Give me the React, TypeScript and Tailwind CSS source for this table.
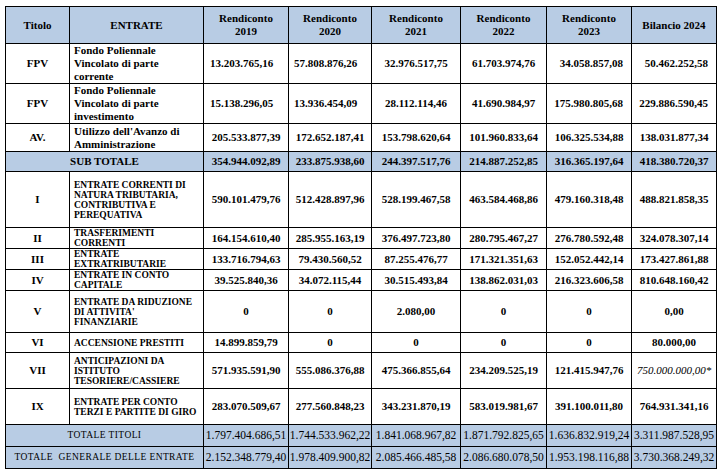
import React from "react";

type Row = {
  t: string;
  d: string[];
  v: string[];
  h: string;
  caps?: boolean;
  fpv?: boolean;
};

const rows: Row[] = [
  {
    t: "FPV",
    d: ["Fondo Poliennale", "Vincolato di parte", "corrente"],
    v: ["13.203.765,16", "57.808.876,26", "32.976.517,75", "61.703.974,76", "34.058.857,08", "50.462.252,58"],
    h: "h-[39px]",
    fpv: true,
  },
  {
    t: "FPV",
    d: ["Fondo Poliennale", "Vincolato di parte", "investimento"],
    v: ["15.138.296,05", "13.936.454,09", "28.112.114,46", "41.690.984,97", "175.980.805,68", "229.886.590,45"],
    h: "h-[39px]",
    fpv: true,
  },
  {
    t: "AV.",
    d: ["Utilizzo dell'Avanzo di", "Amministrazione"],
    v: ["205.533.877,39", "172.652.187,41", "153.798.620,64", "101.960.833,64", "106.325.534,88", "138.031.877,34"],
    h: "h-[28px]",
  },
];

const rows2: Row[] = [
  {
    t: "I",
    d: ["ENTRATE CORRENTI DI", "NATURA TRIBUTARIA,", "CONTRIBUTIVA E", "PEREQUATIVA"],
    v: ["590.101.479,76", "512.428.897,96", "528.199.467,58", "463.584.468,86", "479.160.318,48", "488.821.858,35"],
    h: "h-[56px]",
    caps: true,
  },
  {
    t: "II",
    d: ["TRASFERIMENTI", "CORRENTI"],
    v: ["164.154.610,40", "285.955.163,19", "376.497.723,80", "280.795.467,27", "276.780.592,48", "324.078.307,14"],
    h: "h-[21px]",
    caps: true,
  },
  {
    t: "III",
    d: ["ENTRATE", "EXTRATRIBUTARIE"],
    v: ["133.716.794,63", "79.430.560,52", "87.255.476,77", "171.321.351,63", "152.052.442,14", "173.427.861,88"],
    h: "h-[20px]",
    caps: true,
  },
  {
    t: "IV",
    d: ["ENTRATE IN CONTO", "CAPITALE"],
    v: ["39.525.840,36", "34.072.115,44", "30.515.493,84", "138.862.031,03", "216.323.606,58", "810.648.160,42"],
    h: "h-[20px]",
    caps: true,
  },
  {
    t: "V",
    d: ["ENTRATE DA RIDUZIONE", "DI ATTIVITA'", "FINANZIARIE"],
    v: ["0", "0", "2.080,00", "0", "0", "0,00"],
    h: "h-[42px]",
    caps: true,
  },
  {
    t: "VI",
    d: ["ACCENSIONE PRESTITI"],
    v: ["14.899.859,79", "0", "0", "0", "0", "80.000,00"],
    h: "h-[20px]",
    caps: true,
  },
  {
    t: "VII",
    d: ["ANTICIPAZIONI DA", "ISTITUTO", "TESORIERE/CASSIERE"],
    v: ["571.935.591,90", "555.086.376,88", "475.366.855,64", "234.209.525,19", "121.415.947,76", "750.000.000,00*"],
    h: "h-[36px]",
    caps: true,
  },
  {
    t: "IX",
    d: ["ENTRATE PER CONTO", "TERZI E PARTITE DI GIRO"],
    v: ["283.070.509,67", "277.560.848,23", "343.231.870,19", "583.019.981,67", "391.100.011,80", "764.931.341,16"],
    h: "h-[36px]",
    caps: true,
  },
];

const cell = "border border-black p-0 align-middle font-['Liberation_Serif'] leading-[13px]";
const capsCell = "border border-black p-0 align-middle font-['Liberation_Serif'] leading-[10px]";
const blue = "bg-[#b8cce4]";

function Lines({ lines }: { lines: string[] }) {
  return (
    <>
      {lines.map((l, i) => (
        <React.Fragment key={i}>
          {i > 0 && <br />}
          {l}
        </React.Fragment>
      ))}
    </>
  );
}

function DataRow({ r }: { r: Row }) {
  return (
    <tr className={r.h}>
      <td className={`${cell} text-center font-bold text-[11px]`}>{r.t}</td>
      <td
        className={
          r.caps
            ? `${capsCell} text-left pl-[4px] font-bold text-[9.5px]`
            : `${cell} text-left pl-[4px] font-bold text-[11px]`
        }
      >
        <Lines lines={r.d} />
      </td>
      {r.v.map((v, i) => {
        let cls = `${cell} text-[11px] font-bold text-center`;
        if (r.fpv && (i === 0 || i === 1)) cls = `${cell} text-[11px] font-bold text-center pr-[9px]`;
        if (r.fpv && (i === 4 || i === 5)) cls = `${cell} text-[11px] font-bold text-right pr-[8px]`;
        if (v.endsWith("*")) cls = `${cell} text-[11px] font-normal italic text-center`;
        return (
          <td key={i} className={cls}>
            {v}
          </td>
        );
      })}
    </tr>
  );
}

const hcell = `${cell} text-center font-bold text-[11px]`;

export default function App() {
  return (
    <div className="w-[720px] h-[472px] bg-white text-black pt-[6px] pl-[5px] overflow-hidden font-['Liberation_Serif']">
      <table className="border-collapse table-fixed w-[711px]">
        <colgroup>
          <col className="w-[64px]" />
          <col className="w-[134px]" />
          <col className="w-[85px]" />
          <col className="w-[83px]" />
          <col className="w-[89px]" />
          <col className="w-[86px]" />
          <col className="w-[85px]" />
          <col className="w-[85px]" />
        </colgroup>
        <tbody>
          <tr className={`h-[37px] ${blue}`}>
            <td className={hcell}>Titolo</td>
            <td className={hcell}>ENTRATE</td>
            {["2019", "2020", "2021", "2022", "2023"].map((y) => (
              <td key={y} className={hcell}>
                Rendiconto
                <br />
                {y}
              </td>
            ))}
            <td className={hcell}>Bilancio 2024</td>
          </tr>
          {rows.map((r, i) => (
            <DataRow key={i} r={r} />
          ))}
          <tr className={`h-[20px] ${blue}`}>
            <td colSpan={2} className={`${cell} text-center font-bold text-[11px]`}>
              SUB TOTALE
            </td>
            {["354.944.092,89", "233.875.938,60", "244.397.517,76", "214.887.252,85", "316.365.197,64", "418.380.720,37"].map(
              (v, i) => (
                <td key={i} className={`${cell} text-center font-bold text-[11px]`}>
                  {v}
                </td>
              )
            )}
          </tr>
          {rows2.map((r, i) => (
            <DataRow key={i} r={r} />
          ))}
          <tr className={`h-[22px] ${blue}`}>
            <td colSpan={2} className={`${cell} text-center text-[9.5px] tracking-[0.4px]`}>
              TOTALE TITOLI
            </td>
            {["1.797.404.686,51", "1.744.533.962,22", "1.841.068.967,82", "1.871.792.825,65", "1.636.832.919,24", "3.311.987.528,95"].map(
              (v, i) => (
                <td key={i} className={`${cell} text-center text-[11.5px] whitespace-nowrap`}>
                  {v}
                </td>
              )
            )}
          </tr>
          <tr className={`h-[22px] ${blue}`}>
            <td colSpan={2} className={`${cell} text-center text-[9.5px] tracking-[0.4px] whitespace-nowrap`}>
              TOTALE&nbsp; GENERALE DELLE ENTRATE
            </td>
            {["2.152.348.779,40", "1.978.409.900,82", "2.085.466.485,58", "2.086.680.078,50", "1.953.198.116,88", "3.730.368.249,32"].map(
              (v, i) => (
                <td key={i} className={`${cell} text-center text-[11.5px] whitespace-nowrap`}>
                  {v}
                </td>
              )
            )}
          </tr>
        </tbody>
      </table>
    </div>
  );
}
